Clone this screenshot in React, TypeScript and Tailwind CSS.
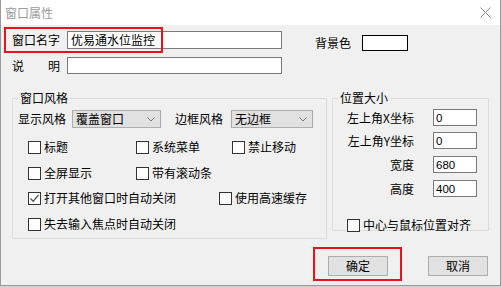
import React from 'react';

const cjk = "font-['Microsoft_YaHei','Noto_Sans_CJK_SC',sans-serif]";

const CheckBox = ({label, checked = false}: {label: string; checked?: boolean}) => (
  <div className="flex items-center h-[16px]">
    <div className="w-[13px] h-[13px] border border-[#333] bg-white flex items-center justify-center shrink-0">
      {checked && (
        <svg width="11" height="11" viewBox="0 0 11 11">
          <path d="M1.5 5.5 L4.2 8.3 L9.5 2" fill="none" stroke="#555" strokeWidth="1.3" />
        </svg>
      )}
    </div>
    <span className="ml-[3px] whitespace-nowrap">{label}</span>
  </div>
);

const Select = ({value, width}: {value: string; width: string}) => (
  <div className={`${width} h-[18px] bg-[#e1e1e1] border border-[#adadad] flex items-center justify-between pl-[3px] pr-[5px]`}>
    <span className="whitespace-nowrap">{value}</span>
    <svg width="8" height="5" viewBox="0 0 8 5">
      <path d="M0.5 0.5 L4 4 L7.5 0.5" fill="none" stroke="#777" strokeWidth="1" />
    </svg>
  </div>
);

const PosRow = ({label, value, className = ''}: {label: string; value: string; className?: string}) => (
  <div className={`flex items-center h-[17px] ${className}`}>
    <span className="w-[81px] text-right whitespace-nowrap">{label}</span>
    <div className="ml-[19px] w-[44px] h-[17px] bg-white border border-[#7a7a7a] flex items-center pl-[2px] font-['Liberation_Sans',sans-serif] text-[11.5px]">
      {value}
    </div>
  </div>
);

export default function App() {
  return (
    <div className={`w-[502px] h-[287px] bg-[#cfcfcf] relative overflow-hidden text-[12px] leading-[16px] text-black ${cjk}`}>
      <div className="w-[501px] h-[286px] flex flex-col border-l border-r border-b border-[#9a9a9a] bg-[#f0f0f0]">
        {/* title */}
        <div className="h-[25px] bg-white flex items-center justify-between pl-[4px] pr-[9px] shrink-0">
          <span className="text-[#9b9b9b]">窗口属性</span>
          <svg width="11" height="11" viewBox="0 0 11 11">
            <path d="M0.5 0.5 L10.5 10.5 M10.5 0.5 L0.5 10.5" stroke="#8a8a8a" strokeWidth="1" />
          </svg>
        </div>

        <div className="pl-[11px] pt-[6px]">
          {/* name row */}
          <div className="flex items-start">
            <div className="flex items-center h-[18px]">
              <span className="w-[55px]">窗口名字</span>
              <div className="w-[215px] h-[18px] bg-white border border-[#7a7a7a] flex items-center pl-[3px]">
                优易通水位监控
              </div>
            </div>
            <span className="ml-[33px] mt-[4px] w-[47px]">背景色</span>
            <div className="mt-[4px] w-[46px] h-[16px] bg-white border border-black" />
          </div>

          {/* desc row */}
          <div className="flex items-center h-[17px] mt-[6px]">
            <div className="w-[48px] flex justify-between">
              <span>说</span>
              <span>明</span>
            </div>
            <div className="ml-[7px] w-[215px] h-[17px] bg-white border border-[#7a7a7a]" />
          </div>

          {/* groups */}
          <div className="flex items-start mt-[16px]">
            <fieldset className="w-[315px] h-[149px] border border-[#dcdcdc] px-0">
              <legend className="ml-[5px] px-[2px] leading-[16px]">窗口风格</legend>
              <div className="flex items-center h-[18px] mt-[4px] pl-[5px]">
                <span className="w-[54px]">显示风格</span>
                <Select value="覆盖窗口" width="w-[89px]" />
                <span className="ml-[14px] w-[56px]">边框风格</span>
                <Select value="无边框" width="w-[82px]" />
              </div>
              <div className="pl-[15px]">
                <div className="flex mt-[11px]">
                  <div className="w-[108px]"><CheckBox label="标题" /></div>
                  <div className="w-[96px]"><CheckBox label="系统菜单" /></div>
                  <CheckBox label="禁止移动" />
                </div>
                <div className="flex mt-[10px]">
                  <div className="w-[108px]"><CheckBox label="全屏显示" /></div>
                  <CheckBox label="带有滚动条" />
                </div>
                <div className="flex mt-[9px]">
                  <div className="w-[191px]"><CheckBox label="打开其他窗口时自动关闭" checked /></div>
                  <CheckBox label="使用高速缓存" />
                </div>
                <div className="flex mt-[10px]">
                  <CheckBox label="失去输入焦点时自动关闭" />
                </div>
              </div>
            </fieldset>

            <fieldset className="ml-[5px] w-[157px] h-[141px] border border-[#dcdcdc] px-0">
              <legend className="ml-[5px] px-[2px] leading-[16px]">位置大小</legend>
              <PosRow label="左上角X坐标" value="0" className="mt-[3px]" />
              <PosRow label="左上角Y坐标" value="0" className="mt-[6px]" />
              <PosRow label="宽度" value="680" className="mt-[7px]" />
              <PosRow label="高度" value="400" className="mt-[7px]" />
              <div className="pl-[14px] mt-[20px]">
                <CheckBox label="中心与鼠标位置对齐" />
              </div>
            </fieldset>
          </div>

          {/* buttons */}
          <div className="flex justify-end mt-[17px] pr-[12px]">
            <button className="w-[60px] h-[20px] bg-[#e1e1e1] border border-[#adadad] leading-[16px]">确定</button>
            <button className="ml-[40px] w-[60px] h-[20px] bg-[#e1e1e1] border border-[#adadad] leading-[16px]">取消</button>
          </div>
        </div>
      </div>

      {/* highlight marks */}
      <div className="absolute left-[4px] top-[27px] w-[159px] h-[26px] border-2 border-[#e8131f]" />
      <div className="absolute left-[313px] top-[247px] w-[89px] h-[34px] border-2 border-[#e8131f]" />
    </div>
  );
}
